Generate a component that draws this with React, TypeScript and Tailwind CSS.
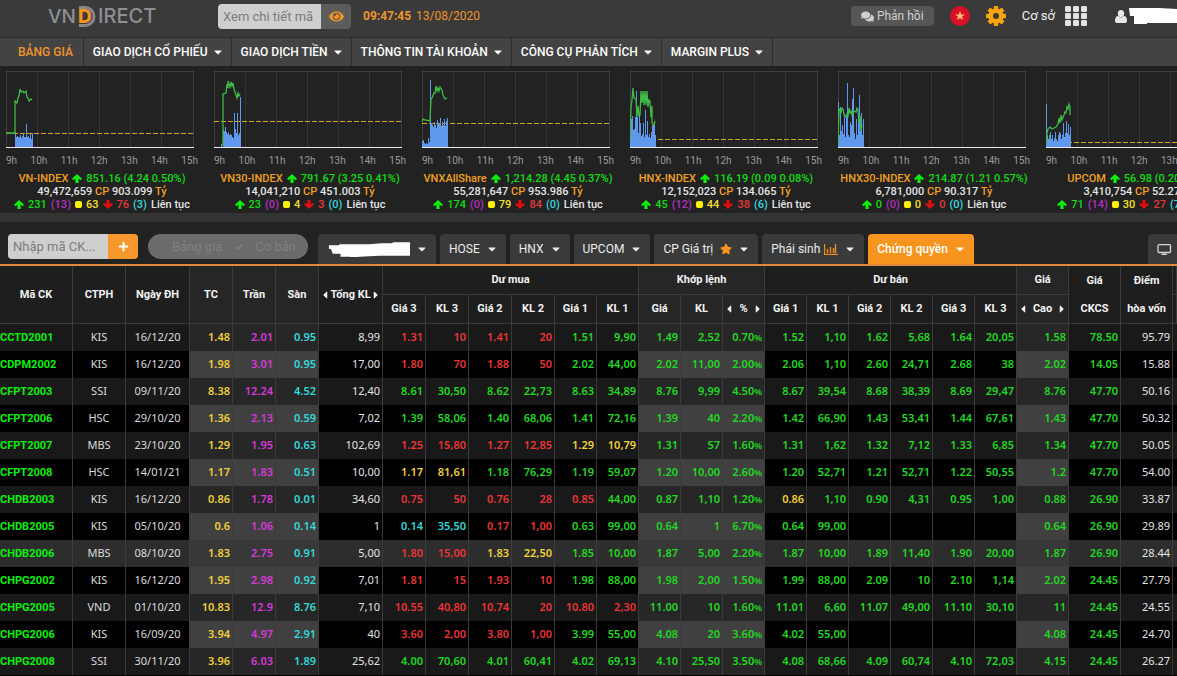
import { FaCaretDown, FaCaretLeft, FaCaretRight, FaCheck, FaComments, FaEye, FaPlus, FaStar } from "react-icons/fa";
import type { ReactNode } from "react";

interface IndexInfo {
  name: string;
  value: string;
  volume: string;
  amount: string;
  up: string;
  ceil: string;
  same: string;
  down: string;
  floor: string;
  refY: number | null;
  line: string;
  bars: number[];
}

const INDEXES: IndexInfo[] = [
  {
    name: "VN-INDEX",
    value: "851.16 (4.24 0.50%)",
    volume: "49,472,659",
    amount: "903.099",
    up: "231",
    ceil: "13",
    same: "63",
    down: "76",
    floor: "3",
    refY: 62,
    line: "0,62 9,62 9,30 11,32 12,27 13,25 14,18 15,21 17,20 18,22 20,20 21,26 22,27 23,30 25,28 26,29",
    bars: [0, 0, 0, 0, 0, 0, 0, 0, 0, 15, 10, 11, 10, 10, 12, 9, 11, 13, 10, 10, 23, 10, 11, 9, 13, 8, 14],
  },
  {
    name: "VN30-INDEX",
    value: "791.67 (3.25 0.41%)",
    volume: "14,041,210",
    amount: "451.003",
    up: "23",
    ceil: "0",
    same: "4",
    down: "3",
    floor: "0",
    refY: 50,
    line: "9,75 9,23 12,22 13,13 14,17 14,10 16,16 17,11 18,15 19,12 20,18 22,24 23,27 24,22 25,25 26,23",
    bars: [0, 0, 0, 0, 0, 0, 0, 3, 0, 17, 16, 20, 15, 13, 15, 12, 13, 12, 10, 9, 34, 18, 14, 34, 12, 14, 50],
  },
  {
    name: "VNXAllShare",
    value: "1,214.28 (4.45 0.37%)",
    volume: "55,281,647",
    amount: "953.986",
    up: "174",
    ceil: "0",
    same: "79",
    down: "84",
    floor: "0",
    refY: 52,
    line: "0,51 1,48 3,49 8,50 9,28 10,27 12,22 13,22 14,15 15,20 16,17 17,20 18,16 20,19 21,24 23,28 25,27",
    bars: [6, 7, 4, 3, 4, 3, 9, 5, 67, 24, 22, 20, 25, 22, 19, 27, 23, 24, 29, 21, 25, 22, 28, 21, 26, 29],
  },
  {
    name: "HNX-INDEX",
    value: "116.19 (0.09 0.08%)",
    volume: "12,152,023",
    amount: "134.065",
    up: "45",
    ceil: "12",
    same: "44",
    down: "38",
    floor: "6",
    refY: 68,
    line: "0,70 1,36 2,29 3,17 4,27 6,28 7,45 8,35 9,45 10,44 11,20 12,32 13,20 14,34 15,20 16,34 17,20 18,36 19,29 20,30 21,46 22,35 22,52 24,54 25,50",
    bars: [30, 28, 31, 17, 18, 30, 56, 30, 14, 31, 24, 11, 13, 24, 10, 37, 12, 26, 10, 13, 9, 15, 22, 23, 22, 12],
  },
  {
    name: "HNX30-INDEX",
    value: "214.87 (1.21 0.57%)",
    volume: "6,781,000",
    amount: "90.317",
    up: "0",
    ceil: "0",
    same: "0",
    down: "0",
    floor: "0",
    refY: null,
    line: "0,74 1,40 2,38 3,42 4,37 5,38 6,44 8,46 9,43 10,45 11,37 12,42 13,40 14,44 16,40 18,41 19,37 20,38 21,52 22,45 23,60 24,54",
    bars: [45, 12, 40, 16, 22, 13, 33, 10, 30, 64, 12, 10, 25, 22, 48, 59, 14, 8, 28, 12, 30, 52, 16, 34, 12, 28],
  },
  {
    name: "UPCOM",
    value: "56.98 (0.20 0.36%)",
    volume: "3,410,754",
    amount: "52.271",
    up: "71",
    ceil: "14",
    same: "30",
    down: "27",
    floor: "7",
    refY: 71,
    line: "0,74 1,62 2,58 4,56 6,58 8,57 10,56 12,53 13,47 14,52 15,44 16,49 18,44 19,41 20,42 21,36 22,38 23,33 24,36 24,44",
    bars: [43, 12, 8, 12, 15, 8, 12, 6, 9, 15, 8, 6, 12, 15, 14, 8, 12, 24, 10, 14, 26, 14, 23, 12, 20],
  },
];

const MENU = ["GIAO DỊCH CỔ PHIẾU", "GIAO DỊCH TIỀN", "THÔNG TIN TÀI KHOẢN", "CÔNG CỤ PHÂN TÍCH", "MARGIN PLUS"];

const HOURS = ["9h", "10h", "11h", "12h", "13h", "14h", "15h"];

// g = up, r = down, y = reference, c = floor
const ROWS: string[] = [
  "CCTD2001 KIS 16/12/20 1.48 2.01 0.95 8,99 r1.31 r10 r1.41 r20 g1.51 g9,90 g1.49 g2,52 g0.70% g1.52 g1,10 g1.62 g5,68 g1.64 g20,05 g1.58 g78.50 95.79",
  "CDPM2002 KIS 16/12/20 1.98 3.01 0.95 17,00 r1.80 r70 r1.88 r50 g2.02 g44,00 g2.02 g11,00 g2.00% g2.06 g1,10 g2.60 g24,71 g2.68 g38 g2.02 g14.05 15.88",
  "CFPT2003 SSI 09/11/20 8.38 12.24 4.52 12,40 g8.61 g30,50 g8.62 g22,73 g8.63 g34,89 g8.76 g9,99 g4.50% g8.67 g39,54 g8.68 g38,39 g8.69 g29,47 g8.76 g47.70 50.16",
  "CFPT2006 HSC 29/10/20 1.36 2.13 0.59 7,02 g1.39 g58,06 g1.40 g68,06 g1.41 g72,16 g1.39 g40 g2.20% g1.42 g66,90 g1.43 g53,41 g1.44 g67,61 g1.43 g47.70 50.32",
  "CFPT2007 MBS 23/10/20 1.29 1.95 0.63 102,69 r1.25 r15,80 r1.27 r12,85 y1.29 y10,79 g1.31 g57 g1.60% g1.31 g1,62 g1.32 g7,12 g1.33 g6,85 g1.34 g47.70 50.05",
  "CFPT2008 HSC 14/01/21 1.17 1.83 0.51 10,00 y1.17 y81,61 g1.18 g76,29 g1.19 g59,07 g1.20 g10,00 g2.60% g1.20 g52,71 g1.21 g52,71 g1.22 g50,55 g1.2 g47.70 54.00",
  "CHDB2003 KIS 16/12/20 0.86 1.78 0.01 34,60 r0.75 r50 r0.76 r28 r0.85 g44,00 g0.87 g1,10 g1.20% y0.86 g1,10 g0.90 g4,31 g0.95 g1,00 g0.88 g26.90 33.87",
  "CHDB2005 KIS 05/10/20 0.6 1.06 0.14 1 c0.14 c35,50 r0.17 r1,00 g0.63 g99,00 g0.64 g1 g6.70% g0.64 g99,00 - - - - g0.64 g26.90 29.89",
  "CHDB2006 MBS 08/10/20 1.83 2.75 0.91 5,00 r1.80 r15,00 y1.83 y22,50 g1.85 g10,00 g1.87 g5,00 g2.20% g1.87 g10,00 g1.89 g11,40 g1.90 g20,00 g1.87 g26.90 28.44",
  "CHPG2002 KIS 16/12/20 1.95 2.98 0.92 7,01 r1.81 r15 r1.93 r10 g1.98 g88,00 g1.98 g2,00 g1.50% g1.99 g88,00 g2.09 g10 g2.10 g1,14 g2.02 g24.45 27.79",
  "CHPG2005 VND 01/10/20 10.83 12.9 8.76 7,10 r10.55 r40,80 r10.74 r20 r10.80 r2,30 g11.00 g10 g1.60% g11.01 g6,60 g11.07 g49,00 g11.10 g30,10 g11 g24.45 24.55",
  "CHPG2006 KIS 16/09/20 3.94 4.97 2.91 40 r3.60 r2,00 r3.80 r1,00 g3.99 g55,00 g4.08 g20 g3.60% g4.02 g55,00 - - - - g4.08 g24.45 24.70",
  "CHPG2008 SSI 30/11/20 3.96 6.03 1.89 25,62 g4.00 g70,60 g4.01 g60,41 g4.02 g69,13 g4.10 g25,50 g3.50% g4.08 g68,66 g4.09 g60,74 g4.10 g72,03 g4.15 g24.45 26.27",
];

const COLORS: Record<string, string> = {
  g: "text-[#22d822]",
  r: "text-[#ea3535]",
  y: "text-[#f0d03a]",
  c: "text-[#34d8d8]",
};

const COLS = [
  "w-[73px]", "w-[53px]", "w-[64px]", "w-[43px]", "w-[43px]", "w-[43px]", "w-[64px]",
  "w-[43px]", "w-[43px]", "w-[43px]", "w-[43px]", "w-[42px]", "w-[42px]",
  "w-[42px]", "w-[42px]", "w-[42px]",
  "w-[42px]", "w-[42px]", "w-[42px]", "w-[42px]", "w-[42px]", "w-[42px]",
  "w-[52px]", "w-[52px]", "w-[52px]", "w-[4px]",
];

const isShaded = (col: number) => (col >= 3 && col <= 5) || (col >= 13 && col <= 15) || col === 22;

function Logo() {
  return (
    <svg className="h-[26px] w-[112px]" viewBox="0 0 112 26" role="img" aria-label="VNDIRECT">
      <g fill="#8d8f92" fontFamily="Inter, 'Liberation Sans', sans-serif" fontSize="19" fontWeight="500">
        <text x="0" y="19">VN</text>
        <text x="50" y="19" fontSize="20">IRECT</text>
      </g>
      <path d="M31 3.500h6a9 9 0 0 1 0 18h-6" fill="none" stroke="#85878a" strokeWidth="3" />
      <text x="30" y="19" fill="#f7941d" fontFamily="Inter, 'Liberation Sans', sans-serif" fontSize="19" fontWeight="800">D</text>
    </svg>
  );
}

function GearIcon() {
  return (
    <svg className="size-5" viewBox="0 0 20 20" fill="#fba30a">
      {[0, 45, 90, 135].map((a) => (
        <rect key={a} x="7.8" y="0" width="4.4" height="20" rx="0.8" transform={`rotate(${a} 10 10)`} />
      ))}
      <circle cx="10" cy="10" r="7.6" />
      <circle cx="10" cy="10" r="3" fill="#3a3a3a" />
    </svg>
  );
}

function GridIcon() {
  return (
    <svg className="h-5 w-[22px]" viewBox="0 0 22 20" fill="#e3e3e3">
      {[0, 1, 2].map((r) =>
        [0, 1, 2].map((c) => <rect key={`${r}-${c}`} x={c * 8} y={r * 7} width="6" height="6" rx="1.2" />),
      )}
    </svg>
  );
}

function Arrow({ down = false }: { down?: boolean }) {
  return (
    <svg className={`h-[9px] w-2.5 shrink-0 ${down ? "rotate-180 text-[#e01010]" : "text-[#0cf00c]"}`} viewBox="0 0 10 9" fill="currentColor">
      <path d="M5 0l5 4.800-1.500 1.400-1.900-1.700V9H3.400V4.500L1.500 6.200 0 4.800z" />
    </svg>
  );
}

function IndexChart({ info }: { info: IndexInfo }) {
  return (
    <svg className="block h-[78px] w-[188px]" viewBox="0 0 188 78">
      {[31, 62, 93, 124, 155].map((x) => (
        <path key={x} d={`M${x}.5 1V76`} stroke="#343434" />
      ))}
      <rect x="0.5" y="0.5" width="187" height="76" fill="none" stroke="#3f3f3f" />
      {info.refY !== null && (
        <path d={`M0 ${info.refY}.5H188`} stroke="#d0a818" strokeDasharray="5 2" />
      )}
      {info.bars.map((h, x) => (
        <rect key={x} x={x} y={76 - h} width="1" height={h} fill="#6098ee" />
      ))}
      <polyline points={info.line} fill="none" stroke="#3fbb46" strokeWidth="1.3" />
      <path d="M0 76.5H188" stroke="#e8e8f4" />
    </svg>
  );
}

function IndexBlock({ info }: { info: IndexInfo }) {
  return (
    <section className="w-48 shrink-0 whitespace-nowrap">
      <IndexChart info={info} />
      <div className="mt-[5px] flex justify-between text-[10px] leading-[14px] text-[#9a9a9a]">
        {HOURS.map((h) => (
          <span key={h}>{h}</span>
        ))}
      </div>
      <div className="mt-1 flex flex-col items-center text-[11px] leading-[13px] font-medium text-[#e4e4e4]">
        <p className="flex items-center gap-1 text-[#12dc12]">
          <span className="text-[#f0a020]">{info.name}</span>
          <Arrow />
          <span>{info.value}</span>
        </p>
        <p>
          {info.volume} <span className="text-[#f0a020]">CP</span> {info.amount} <span className="text-[#f0a020]">Tỷ</span>
        </p>
        <p className="flex items-center gap-1">
          <Arrow />
          <span className="text-[#12dc12]">{info.up}</span>
          <span className="text-[#b52fc0]">({info.ceil})</span>
          <i className="size-[7px] rounded-[2px] bg-[#fff200]" />
          <span className="text-[#f5e02a]">{info.same}</span>
          <Arrow down />
          <span className="text-[#e23a3a]">{info.down}</span>
          <span className="text-[#38d6dc]">({info.floor})</span>
          <span>Liên tục</span>
        </p>
      </div>
    </section>
  );
}

function Tab({ children, active = false }: { children: ReactNode; active?: boolean }) {
  return (
    <button
      type="button"
      className={`flex h-[30px] shrink-0 items-center gap-[7px] rounded-t-sm px-[9px] text-[12px] ${
        active ? "bg-[#f7941d] font-medium text-white" : "bg-[#3a3a3a] text-[#ececec]"
      }`}
    >
      {children}
      <FaCaretDown className="h-3 w-2.5 shrink-0" />
    </button>
  );
}

function HeadCell({ children, shaded = false, colSpan, rowSpan }: { children?: ReactNode; shaded?: boolean; colSpan?: number; rowSpan?: number }) {
  return (
    <th
      colSpan={colSpan}
      rowSpan={rowSpan}
      className={`h-[29px] overflow-hidden border-r border-b border-[#3b3b3b] p-0 text-center font-bold ${shaded ? "bg-[#262626]" : "bg-[#1e1e1e]"}`}
    >
      {children}
    </th>
  );
}

function Sorted({ children }: { children: ReactNode }) {
  return (
    <span className="flex items-center justify-between px-[3px]">
      <FaCaretLeft className="h-3 w-1.5" />
      {children}
      <FaCaretRight className="h-3 w-1.5" />
    </span>
  );
}

function QuoteRow({ row, index }: { row: string; index: number }) {
  const cells = row.split(" ");
  const hovered = index === 8;
  const odd = index % 2 === 1;
  const base = hovered ? "bg-[#2d2d2d]" : odd ? "bg-black" : "bg-[#191919]";
  const shade = hovered ? "bg-[#383838]" : odd ? "bg-[#404040]" : "bg-[#272727]";

  return (
    <tr>
      {cells.map((cell, i) => {
        const bg = isShaded(i) ? shade : base;
        let style = "pr-[2px] pb-[2px] text-right";
        let text: ReactNode = cell;

        if (i === 0) style = "text-left font-[Roboto] font-bold text-[#0cf00c]";
        else if (i < 3) style = "pb-[2px] text-center text-[#dcdcdc]";
        else if (i === 3) style += " font-semibold text-[#f0d03a]";
        else if (i === 4) style += " font-semibold text-[#d63ad6]";
        else if (i === 5) style += " font-semibold text-[#34d8d8]";
        else if (i === 6 || i === 24) style += " text-[#e4e4e4]";
        else {
          style += ` font-semibold ${COLORS[cell[0]] ?? ""}`;
          text = cell === "-" ? "" : cell.slice(1);
          if (cell.endsWith("%")) {
            text = (
              <>
                {cell.slice(1, -1)}
                <span className="text-[9px] leading-none">%</span>
              </>
            );
          }
        }
        return (
          <td key={i} className={`h-[27px] overflow-hidden border-r border-[#3b3b3b] p-0 whitespace-nowrap ${bg} ${style}`}>
            {text}
          </td>
        );
      })}
      <td className={base} />
    </tr>
  );
}

export default function App() {
  return (
    <div className="min-h-screen overflow-hidden bg-black font-[Roboto,sans-serif] text-white">
      <header className="flex h-[38px] items-start border-b border-[#2c2c2c] bg-[#3a3a3a] pl-12">
        <div className="w-[170px] shrink-0 pt-1">
          <Logo />
        </div>
        <div className="mt-1 flex h-[25px] shrink-0">
          <input
            aria-label="Xem chi tiết mã"
            placeholder="Xem chi tiết mã"
            className="w-[103px] rounded-l-sm bg-[#cfcfcf] pl-[5px] text-[13px] placeholder:text-[#7c7c7c]"
          />
          <button type="button" aria-label="Xem" className="flex w-[30px] items-center justify-center rounded-r-sm bg-[#5c5c5c]">
            <FaEye className="size-[15px] text-[#f7941d]" />
          </button>
        </div>
        <p className="mt-2 ml-3 flex shrink-0 gap-[5px] text-[12px] leading-4 text-[#f0952b]">
          <b>09:47:45</b>
          <span>13/08/2020</span>
        </p>
        <div className="ml-auto flex h-8 shrink-0 items-center">
          <button type="button" className="flex h-5 w-[83px] items-center justify-center gap-[3px] rounded-sm bg-[#565656] text-[12px] text-[#cfcfcf]">
            <FaComments className="size-[13px]" />
            Phản hồi
          </button>
          <svg className="ml-4 size-5" viewBox="0 0 20 20">
            <circle cx="10" cy="10" r="10" fill="#d8102b" />
            <path d="M10 4.8l1.2 3.6h3.8l-3 2.3 1.1 3.6-3.1-2.2-3.1 2.2L8 10.700l-3-2.300h3.800z" fill="#f9b76a" />
          </svg>
          <span className="ml-4">
            <GearIcon />
          </span>
          <span className="ml-4 text-[13px] text-[#f0f0f0]">Cơ sở</span>
          <span className="ml-2.5">
            <GridIcon />
          </span>
          <svg className="ml-7 h-[13px] w-3" viewBox="0 0 12 13" fill="#e8e8e8">
            <ellipse cx="6" cy="3.600" rx="3.200" ry="3.600" />
            <path d="M0 11c0-3 1-5 3-5 .8.9 1.800 1.400 3 1.400S8.200 6.900 9 6c2 0 3 2 3 5 0 1.300-.8 2-1.800 2H1.800C.8 13 0 12.300 0 11z" />
          </svg>
          <svg className="ml-0.5 h-4 w-12" viewBox="0 0 48 16" fill="#fff">
            <path d="M0 0h30l18 1v14H18v1H5V8H1z" />
          </svg>
        </div>
      </header>

      <nav className="flex h-7 bg-[#434343] text-[12px] font-medium">
        <a href="#bang-gia" className="flex items-center border-r border-[#2f2f2f] pr-2.5 pl-[18px] text-[#f0952b]">
          BẢNG GIÁ
        </a>
        {MENU.map((item) => (
          <a key={item} href="#menu" className="flex items-center gap-1.5 border-r border-[#2f2f2f] px-[9px] whitespace-nowrap">
            {item}
            <FaCaretDown className="h-3 w-2" />
          </a>
        ))}
      </nav>

      <div className="flex h-[147px] gap-4 overflow-hidden bg-[#222] pt-[5px] pl-[6px]">
        {INDEXES.map((info) => (
          <IndexBlock key={info.name} info={info} />
        ))}
      </div>
      <div className="h-[9px] bg-[#333]" />

      <div className="flex h-[44px] items-start gap-1 border-b-2 border-[#dd8a3c] bg-[#222] pt-3 pl-2">
        <div className="flex h-[25px] shrink-0">
          <input
            aria-label="Nhập mã CK"
            placeholder="Nhập mã CK..."
            className="w-[100px] rounded-l-sm bg-[#cfcfcf] pl-[5px] text-[13px] placeholder:text-[#7c7c7c]"
          />
          <button type="button" aria-label="Thêm mã" className="flex w-[30px] items-center justify-center rounded-r-sm bg-[#f7982c]">
            <FaPlus className="size-[11px]" />
          </button>
        </div>
        <button type="button" className="mx-1.5 flex h-[25px] w-40 shrink-0 items-center justify-between rounded-full bg-[#6b6b6b] pr-3 pl-6 text-[13px] text-[#808080]">
          Bảng giá
          <FaCheck className="size-2" />
          Cơ bản
        </button>
        <Tab>
          <svg className="h-4 w-[83px]" viewBox="0 0 86 16" fill="#fff">
            <path d="M2 4h10l1-1h30l14-1h10l2-1h17v14H54l-20 1-10 1v-1H14v-3H6l-2-5H2z" />
          </svg>
        </Tab>
        <Tab>HOSE</Tab>
        <Tab>HNX</Tab>
        <Tab>UPCOM</Tab>
        <Tab>
          CP Giá trị
          <FaStar className="size-3 text-[#f7941d]" />
        </Tab>
        <Tab>
          <span className="flex items-center gap-1">
            Phái sinh
            <svg className="h-3 w-3.5" viewBox="0 0 14 12" fill="none" stroke="#f08c1e">
              <path d="M.5 1v10.500H14M3.500 6v4M6.500 4v6M9.500 5v5M11.500 1v9" strokeWidth="1.400" />
            </svg>
          </span>
        </Tab>
        <Tab active>Chứng quyền</Tab>
        <button type="button" aria-label="Toàn màn hình" className="ml-auto flex h-[30px] w-[29px] items-center justify-end rounded-tl-sm bg-[#3a3a3a] pr-[5px]">
          <svg className="h-[11px] w-[15px]" viewBox="0 0 15 11" fill="none" stroke="#d5d5d5" strokeWidth="1.300">
            <rect x="1" y="0.700" width="12.500" height="7.800" rx="1" />
            <path d="M4.500 10.300h5.500M7.200 8.500v1.800" />
          </svg>
        </button>
      </div>

      <table className="w-full table-fixed border-separate border-spacing-0 font-['Noto_Sans',sans-serif] text-[11px] leading-4">
        <colgroup>
          {COLS.map((w, i) => (
            <col key={i} className={w} />
          ))}
        </colgroup>
        <thead className="font-[Roboto,sans-serif] text-[11px] text-[#f2f2f2]">
          <tr>
            <HeadCell rowSpan={2}>Mã CK</HeadCell>
            <HeadCell rowSpan={2}>CTPH</HeadCell>
            <HeadCell rowSpan={2}>Ngày ĐH</HeadCell>
            <HeadCell rowSpan={2} shaded>TC</HeadCell>
            <HeadCell rowSpan={2} shaded>Trần</HeadCell>
            <HeadCell rowSpan={2} shaded>Sàn</HeadCell>
            <HeadCell rowSpan={2}>
              <Sorted>Tổng KL</Sorted>
            </HeadCell>
            <HeadCell colSpan={6}>Dư mua</HeadCell>
            <HeadCell colSpan={3} shaded>Khớp lệnh</HeadCell>
            <HeadCell colSpan={6}>Dư bán</HeadCell>
            <HeadCell shaded>Giá</HeadCell>
            <HeadCell rowSpan={2}>
              <span className="block leading-7">Giá</span>
              <span className="block leading-7">CKCS</span>
            </HeadCell>
            <HeadCell rowSpan={2}>
              <span className="block leading-7">Điểm</span>
              <span className="block leading-7">hòa vốn</span>
            </HeadCell>
            <HeadCell />
          </tr>
          <tr>
            {["Giá 3", "KL 3", "Giá 2", "KL 2", "Giá 1", "KL 1"].map((t) => (
              <HeadCell key={t}>{t}</HeadCell>
            ))}
            <HeadCell shaded>Giá</HeadCell>
            <HeadCell shaded>KL</HeadCell>
            <HeadCell shaded>
              <Sorted>%</Sorted>
            </HeadCell>
            {["Giá 1", "KL 1", "Giá 2", "KL 2", "Giá 3", "KL 3"].map((t) => (
              <HeadCell key={t}>{t}</HeadCell>
            ))}
            <HeadCell shaded>
              <Sorted>Cao</Sorted>
            </HeadCell>
            <HeadCell />
          </tr>
        </thead>
        <tbody>
          {ROWS.map((row, i) => (
            <QuoteRow key={row} row={row} index={i} />
          ))}
        </tbody>
      </table>
    </div>
  );
}
